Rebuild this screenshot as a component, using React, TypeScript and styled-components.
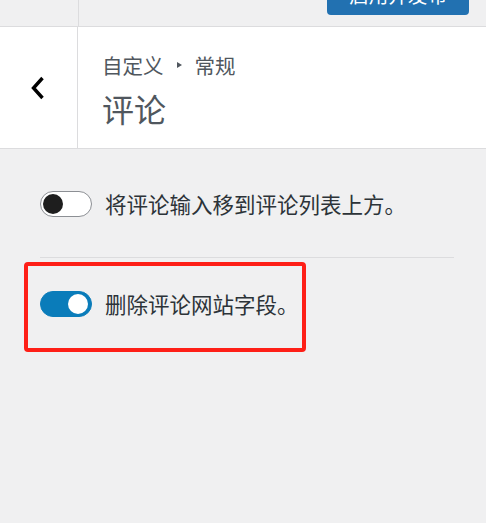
import React from "react";
import styled, { createGlobalStyle } from "styled-components";

const Global = createGlobalStyle`
  html, body { margin: 0; padding: 0; background: #f0f0f1; }
  body {
    font-family: "Noto Sans CJK SC", "Noto Sans", sans-serif;
    overflow: hidden;
  }
`;

const Page = styled.div`
  width: 486px;
  height: 523px;
  background: #f0f0f1;
  overflow: hidden;
`;

const TopBar = styled.div`
  display: flex;
  height: 26px;
  border-bottom: 1px solid #dcdcde;
  background: #f0f0f1;
`;

const SideCell = styled.div`
  width: 78px;
  flex: none;
  border-right: 1px solid #dcdcde;
`;

const TopActions = styled.div`
  flex: 1;
  display: flex;
  justify-content: flex-end;
  padding-right: 17px;
`;

const PublishButton = styled.button`
  width: 142px;
  height: 40px;
  margin-top: -25px;
  border: none;
  border-radius: 4px;
  background: #2271b1;
  color: #fff;
  font-family: inherit;
  font-size: 19.5px;
  line-height: 40px;
  padding: 0;
`;

const Header = styled.div`
  display: flex;
  height: 121px;
  background: #fff;
  border-bottom: 1px solid #dcdcde;
`;

const BackCell = styled.div`
  width: 78px;
  flex: none;
  border-right: 1px solid #dcdcde;
  display: flex;
  align-items: center;
  justify-content: center;
  padding-right: 2px;
  box-sizing: border-box;
`;

const TitleBlock = styled.div`
  padding: 24px 0 0 24px;
  display: flex;
  flex-direction: column;
`;

const Breadcrumb = styled.div`
  display: flex;
  align-items: center;
  font-size: 20.5px;
  line-height: 28px;
  color: #50575e;
  margin-bottom: 8px;
`;

const Arrow = styled.span`
  display: inline-block;
  width: 0;
  height: 0;
  border-top: 3.5px solid transparent;
  border-bottom: 3.5px solid transparent;
  border-left: 5px solid #50575e;
  margin: 0 13px 0 13px;
`;

const Title = styled.h3`
  margin: 0;
  font-size: 32px;
  line-height: 42px;
  font-weight: 400;
  color: #50575e;
`;

const Content = styled.div`
  padding: 42px 32px 0 40px;
`;

const Row = styled.label`
  position: relative;
  display: flex;
  align-items: center;
  gap: 13px;
  height: 26px;
`;

const Track = styled.span<{ $on: boolean }>`
  position: relative;
  flex: none;
  width: 52px;
  height: 26px;
  box-sizing: border-box;
  border-radius: 13px;
  border: 1px solid ${(p) => (p.$on ? "#0a7cba" : "#8c8f94")};
  background: ${(p) => (p.$on ? "#0a7cba" : "#fff")};
`;

const Knob = styled.span<{ $on: boolean }>`
  position: absolute;
  top: 2px;
  left: ${(p) => (p.$on ? "27px" : "2px")};
  width: 20px;
  height: 20px;
  border-radius: 50%;
  background: ${(p) => (p.$on ? "#fff" : "#1e1e1e")};
`;

const RowText = styled.span`
  font-size: 21.5px;
  line-height: 26px;
  color: #2c3338;
  white-space: nowrap;
`;

const Separator = styled.hr`
  border: none;
  border-top: 1px solid #dcdcde;
  margin: 40px 0 33px;
`;

const Highlight = styled.span`
  position: absolute;
  left: -16px;
  top: -29px;
  width: 282px;
  height: 90px;
  box-sizing: border-box;
  border: 4px solid #fe1f17;
  border-radius: 4px;
  pointer-events: none;
`;

function Toggle({ on }: { on: boolean }) {
  return (
    <Track $on={on}>
      <Knob $on={on} />
    </Track>
  );
}

export default function App() {
  return (
    <Page>
      <Global />
      <TopBar>
        <SideCell />
        <TopActions>
          <PublishButton>启用并发布</PublishButton>
        </TopActions>
      </TopBar>
      <Header>
        <BackCell>
          <svg width="16" height="26" viewBox="0 0 16 26">
            <path d="M12.5 3 L3.5 13 L12.5 23" fill="none" stroke="#000" strokeWidth="3.4" />
          </svg>
        </BackCell>
        <TitleBlock>
          <Breadcrumb>
            自定义<Arrow />常规
          </Breadcrumb>
          <Title>评论</Title>
        </TitleBlock>
      </Header>
      <Content>
        <Row>
          <Toggle on={false} />
          <RowText>将评论输入移到评论列表上方。</RowText>
        </Row>
        <Separator />
        <Row>
          <Toggle on={true} />
          <RowText>删除评论网站字段。</RowText>
          <Highlight />
        </Row>
      </Content>
    </Page>
  );
}
